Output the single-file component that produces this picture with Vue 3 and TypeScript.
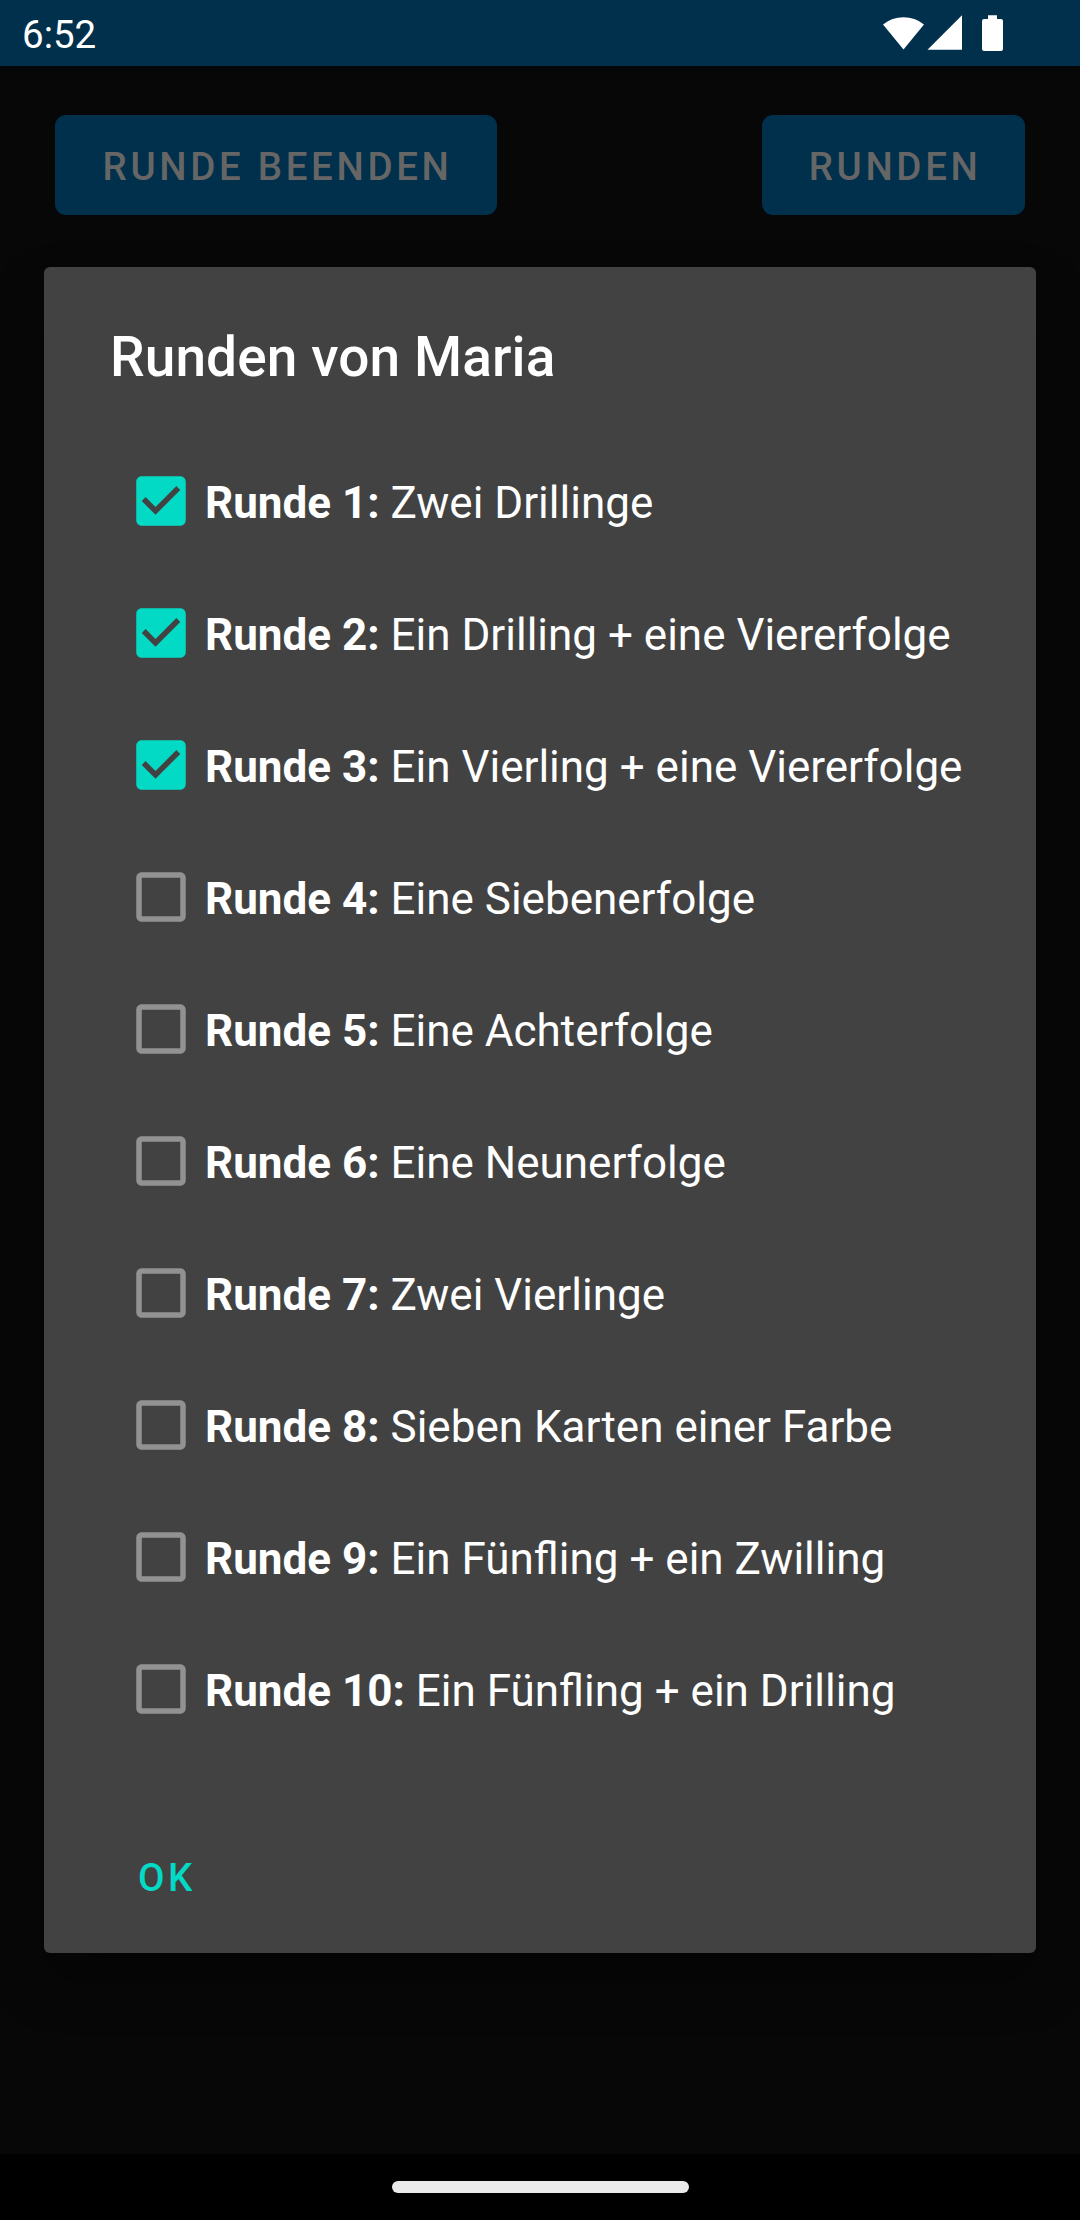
<script setup lang="ts">
interface Round {
  id: number
  description: string
  done: boolean
}

const player = 'Maria'

const rounds: Round[] = [
  { id: 1, description: 'Zwei Drillinge', done: true },
  { id: 2, description: 'Ein Drilling + eine Viererfolge', done: true },
  { id: 3, description: 'Ein Vierling + eine Viererfolge', done: true },
  { id: 4, description: 'Eine Siebenerfolge', done: false },
  { id: 5, description: 'Eine Achterfolge', done: false },
  { id: 6, description: 'Eine Neunerfolge', done: false },
  { id: 7, description: 'Zwei Vierlinge', done: false },
  { id: 8, description: 'Sieben Karten einer Farbe', done: false },
  { id: 9, description: 'Ein Fünfling + ein Zwilling', done: false },
  { id: 10, description: 'Ein Fünfling + ein Drilling', done: false },
]
</script>

<template>
  <div class="screen">
    <header class="status-bar">
      <span class="clock">6:52</span>
      <svg class="status-icons" width="124" height="66" viewBox="880 0 124 66" fill="#fff">
        <path d="M903.5 49.5 883 24.5a33 33 0 0 1 41 0Z" />
        <path d="M927.5 49.7H962V15.2Z" />
        <path d="M988 15.2h9V19h4a2 2 0 0 1 2 2v28a2 2 0 0 1-2 2h-17a2 2 0 0 1-2-2V21a2 2 0 0 1 2-2h4Z" />
      </svg>
    </header>

    <div class="toolbar">
      <button class="action end">RUNDE BEENDEN</button>
      <button class="action list">RUNDEN</button>
    </div>

    <main class="dialog">
      <h1 class="title">Runden von {{ player }}</h1>
      <ul class="rounds">
        <li v-for="round in rounds" :key="round.id" class="round">
          <svg class="checkbox" :class="{ checked: round.done }" width="66" height="66" viewBox="0 0 24 24">
            <path
              v-if="round.done"
              d="M19 3H5c-1.11 0-2 .9-2 2v14c0 1.1.89 2 2 2h14c1.11 0 2-.9 2-2V5c0-1.1-.89-2-2-2zm-9 14l-5-5 1.41-1.41L10 14.17l7.59-7.59L19 8l-9 9z"
            />
            <path
              v-else
              d="M19 5v14H5V5h14m0-2H5c-1.1 0-2 .9-2 2v14c0 1.1.9 2 2 2h14c1.1 0 2-.9 2-2V5c0-1.1-.9-2-2-2z"
            />
          </svg>
          <span class="label"><b>Runde {{ round.id }}:</b> {{ round.description }}</span>
        </li>
      </ul>
      <button class="confirm">OK</button>
    </main>

    <footer class="nav-bar"><span class="handle"></span></footer>
  </div>
</template>

<style>
body {
  margin: 0;
  background: #070707;
}
</style>

<style scoped>
.screen {
  display: flex;
  flex-direction: column;
  width: 1080px;
  height: 2220px;
  overflow: hidden;
  background: #070707;
  color: #fff;
  font-family: Roboto, sans-serif;
}

.status-bar {
  display: flex;
  flex: none;
  justify-content: space-between;
  height: 66px;
  padding: 0 76px 0 22px;
  background: #00304b;
}

.clock {
  font-size: 38.5px;
  line-height: 69px;
}

.toolbar {
  display: flex;
  flex: none;
  justify-content: space-between;
  padding: 49px 55px 0;
}

.action {
  height: 100px;
  padding: 2px 0 0;
  border: 0;
  border-radius: 11px;
  background: #00304b;
  color: #666;
  font: 500 38.5px/100px Roboto, sans-serif;
  letter-spacing: 3.65px;
  text-indent: 3.2px;
  white-space: nowrap;
}

.end {
  width: 442px;
}

.list {
  width: 263px;
}

.dialog {
  display: flex;
  flex: none;
  flex-direction: column;
  align-items: flex-start;
  box-sizing: border-box;
  height: 1686px;
  margin: 52px 44px 0;
  padding-top: 57px;
  border-radius: 6px;
  background: #424242;
  box-shadow: 0 28px 50px rgba(0, 0, 0, 0.35);
}

.title {
  margin: 0 0 45px;
  padding-left: 66px;
  font-size: 55px;
  font-weight: 500;
  letter-spacing: 0.1px;
  line-height: 66px;
}

.rounds {
  margin: 0;
  padding: 0 0 0 84px;
  list-style: none;
}

.round {
  display: flex;
  align-items: center;
  height: 132px;
}

.checkbox {
  flex: none;
  fill: #929292;
}

.checked {
  fill: #03dac5;
}

.label {
  padding: 3px 0 0 11px;
  font-size: 44px;
  line-height: 52px;
  white-space: nowrap;
}

.confirm {
  margin: 73px 0 0 94px;
  padding: 0;
  border: 0;
  background: none;
  color: #03dac5;
  font: 500 38.5px/100px Roboto, sans-serif;
  letter-spacing: 3.44px;
}

.nav-bar {
  display: flex;
  flex: none;
  justify-content: center;
  height: 66px;
  margin-top: auto;
  background: #000;
}

.handle {
  width: 297px;
  height: 12px;
  margin-top: 27px;
  border-radius: 6px;
  background: #ebebeb;
}
</style>
